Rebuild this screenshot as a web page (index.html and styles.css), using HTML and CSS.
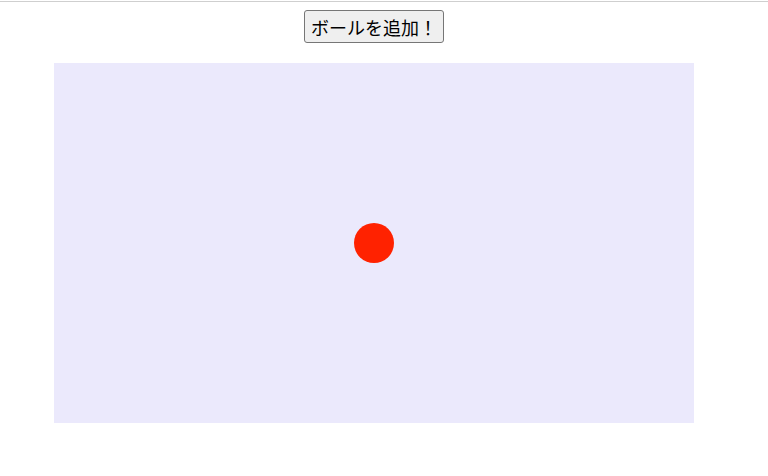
FILE: index.html
```html
<!DOCTYPE html>
<html lang="ja">
<head>
<meta charset="utf-8">
<link rel="stylesheet" href="styles.css">
</head>
<body>
<div class="topline"></div>
<main class="stage-wrap">
  <div class="controls">
    <button class="add-btn">ボールを追加！</button>
  </div>
  <div class="stage">
    <div class="ball"></div>
  </div>
</main>
</body>
</html>
```
FILE: styles.css
```css
html, body {
  margin: 0;
  padding: 0;
  background: #ffffff;
}
.topline {
  margin-top: 1px;
  height: 1px;
  background: #cfcfcf;
}
.stage-wrap {
  width: 640px;
  margin-left: 54px;
  display: flex;
  flex-direction: column;
  align-items: center;
}
.controls {
  margin-top: 8px;
  display: flex;
  justify-content: center;
}
.add-btn {
  box-sizing: border-box;
  width: 140px;
  height: 33px;
  font-family: "Noto Sans CJK JP", sans-serif;
  font-size: 18px;
  line-height: 1;
  padding: 0 6px;
  color: #000;
  background: #efefef;
  border: 1px solid #767676;
  border-radius: 3px;
}
.stage {
  margin-top: 20px;
  width: 640px;
  height: 360px;
  background: #ebe9fc;
  display: flex;
  align-items: center;
  justify-content: center;
}
.ball {
  width: 40px;
  height: 40px;
  border-radius: 50%;
  background: #ff2200;
}
```
